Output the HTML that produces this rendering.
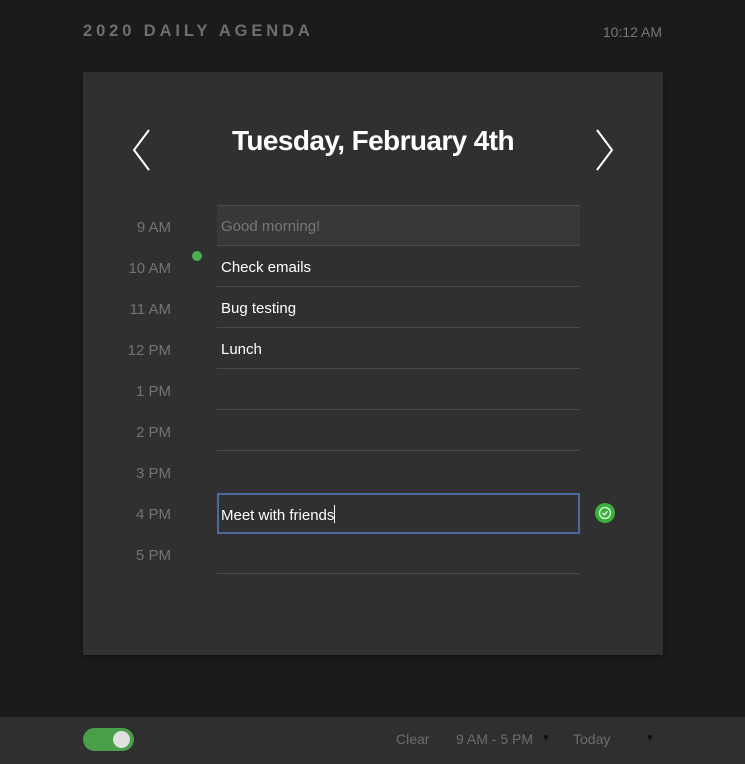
<!DOCTYPE html>
<html><head><meta charset="utf-8">
<style>
*{margin:0;padding:0;box-sizing:border-box}
body{width:745px;height:764px;background:#1b1b1b;font-family:"Liberation Sans",sans-serif;position:relative;overflow:hidden}
.title{position:absolute;left:83px;top:22px;font-size:16.5px;font-weight:bold;letter-spacing:3.9px;color:#6e6e6e}
.clock{position:absolute;right:83px;top:24px;font-size:14px;color:#777}
.card{position:absolute;left:83px;top:72px;width:580px;height:583px;background:#303030;box-shadow:0 2px 4px rgba(0,0,0,.4)}
.date{position:absolute;left:0;width:100%;top:53px;text-align:center;font-size:28px;font-weight:bold;color:#fff;letter-spacing:-0.6px}
.arrow{position:absolute;top:56px}
.t{position:absolute;left:0;width:88px;text-align:right;font-size:15px;color:#737373;padding-top:2px}
.r{position:absolute;left:134px;width:363px;height:41px;border-bottom:1px solid #4a4a4a;font-size:15px;color:#fff;padding:13px 0 0 4px}
.foot{position:absolute;left:0;top:717px;width:745px;height:47px;background:#2f2f2f}
.f{position:absolute;top:14px;font-size:14px;color:#6d6d6d}
</style></head><body>
<div class="title">2020 DAILY AGENDA</div>
<div class="clock">10:12 AM</div>
<div class="card">
<svg class="arrow" style="left:48px" width="22" height="44"><path d="M18 2 L3 22 L18 42" stroke="#fff" stroke-width="2" fill="none"/></svg>
<svg class="arrow" style="left:510px" width="22" height="44"><path d="M4 2 L19 22 L4 42" stroke="#fff" stroke-width="2" fill="none"/></svg>
<div class="date">Tuesday, February 4th</div>
<div class="t" style="top:145px">9 AM</div>
<div class="t" style="top:186px">10 AM</div>
<div class="t" style="top:227px">11 AM</div>
<div class="t" style="top:268px">12 PM</div>
<div class="t" style="top:309px">1 PM</div>
<div class="t" style="top:350px">2 PM</div>
<div class="t" style="top:391px">3 PM</div>
<div class="t" style="top:432px">4 PM</div>
<div class="t" style="top:473px">5 PM</div>
<div style="position:absolute;left:109px;top:179px;width:10px;height:10px;border-radius:50%;background:#4caf50"></div>
<div class="r" style="top:133px;background:#383838;border-top:1px solid #4a4a4a;color:#777;padding-top:12px">Good morning!</div>
<div class="r" style="top:174px">Check emails</div>
<div class="r" style="top:215px">Bug testing</div>
<div class="r" style="top:256px">Lunch</div>
<div class="r" style="top:297px"></div>
<div class="r" style="top:338px"></div>
<div class="r" style="top:379px;border-bottom:none"></div>
<div class="r" style="top:421px;height:41px;border:2px solid #4a6a9f;padding:10px 0 0 2px">Meet with friends<span style="display:inline-block;width:1px;height:18px;background:#fff;vertical-align:-3px"></span></div>
<div class="r" style="top:461px"></div>
<svg style="position:absolute;left:512px;top:431px" width="20" height="20"><circle cx="10" cy="10" r="10" fill="#3cb03c"/><circle cx="10" cy="10" r="5.5" stroke="#e8ffe8" stroke-width="1.2" fill="none"/><path d="M7.5 10 L9.3 11.8 L12.5 8.3" stroke="#fff" stroke-width="1.2" fill="none"/></svg>
</div>
<div class="foot">
<div style="position:absolute;left:83px;top:11px;width:51px;height:23px;border-radius:12px;background:#4a9e48"></div>
<div style="position:absolute;left:113px;top:14px;width:17px;height:17px;border-radius:50%;background:#e0e0e0"></div>
<div class="f" style="left:396px">Clear</div>
<div class="f" style="left:456px">9 AM - 5 PM</div>
<div class="f" style="left:541px;font-size:10px;top:16px;color:#111">▼</div>
<div class="f" style="left:573px">Today</div>
<div class="f" style="left:645px;font-size:10px;top:16px;color:#111">▼</div>
</div>
</body></html>
